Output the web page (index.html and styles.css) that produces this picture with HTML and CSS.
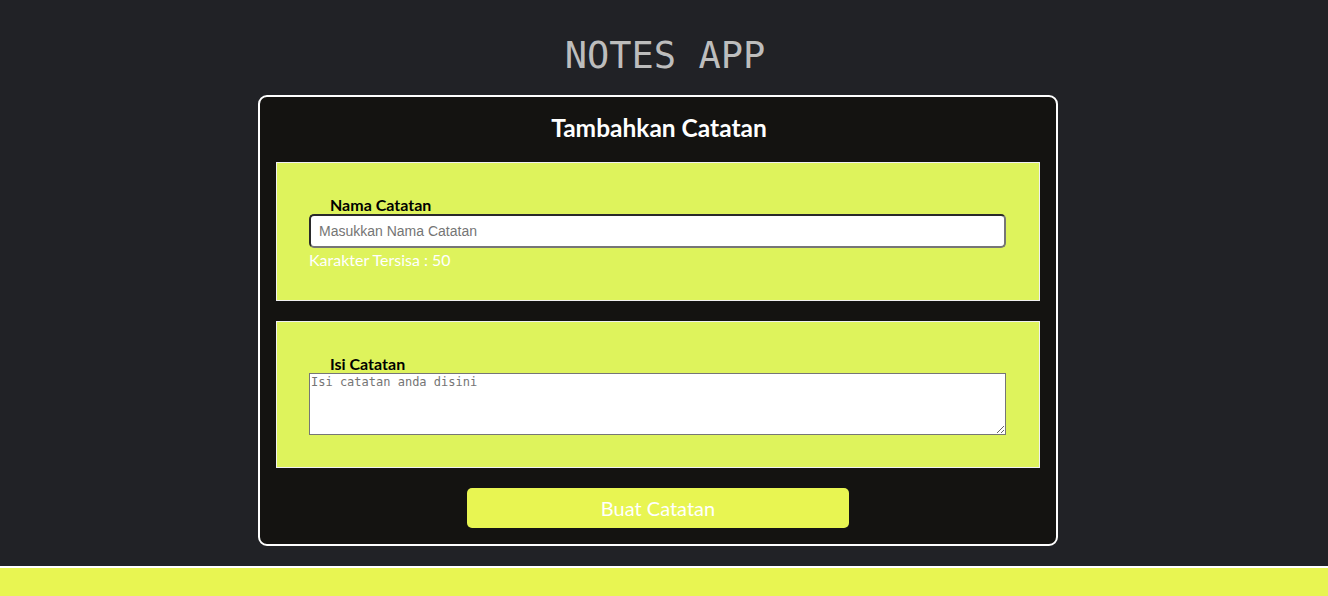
FILE: index.html
```html
<!DOCTYPE html>
<html lang="id">
<head>
<meta charset="utf-8">
<title>Notes App</title>
<link rel="stylesheet" href="styles.css">
</head>
<body>
<header class="app-header">
  <h1 class="app-title">NOTES APP</h1>
</header>
<main class="main">
  <form class="note-card">
    <h2 class="card-title">Tambahkan Catatan</h2>
    <div class="field-box">
      <label class="field-label" for="title">Nama Catatan</label>
      <input class="title-input" id="title" type="text" placeholder="Masukkan Nama Catatan">
      <p class="char-count">Karakter Tersisa : 50</p>
    </div>
    <div class="field-box field-box-body">
      <label class="field-label" for="body">Isi Catatan</label>
      <textarea class="body-input" id="body" placeholder="Isi catatan anda disini"></textarea>
    </div>
    <div class="actions">
      <button class="submit-btn" type="button">Buat Catatan</button>
    </div>
  </form>
</main>
<footer class="footer"></footer>
</body>
</html>
```
FILE: styles.css
```css
* { box-sizing: border-box; }
html, body { margin: 0; padding: 0; }
body {
  background: #212226;
  font-family: Lato, "Liberation Sans", sans-serif;
  min-height: 596px;
  display: flex;
  flex-direction: column;
}
.app-header {
  display: flex;
  justify-content: center;
  padding-top: 34px;
}
.app-title {
  margin: 0;
  font-family: "DejaVu Sans Mono", monospace;
  font-weight: 400;
  font-size: 37px;
  line-height: 44px;
  color: #bdbdbd;
  letter-spacing: 0;
  padding-left: 2px;
}
.main {
  display: flex;
  padding-top: 17px;
  padding-left: 258px;
}
.note-card {
  width: 800px;
  background: #141311;
  border: 2px solid #ffffff;
  border-radius: 9px;
  padding: 16px 16px 16px 16px;
  display: flex;
  flex-direction: column;
}
.card-title {
  margin: 0 0 19px 0;
  text-align: center;
  color: #ffffff;
  font-size: 24.5px;
  font-weight: 700;
  line-height: 30px;
  padding-left: 2px;
}
.field-box {
  background: #def35c;
  border: 1px solid #f0f0f0;
  padding: 33px 33px 30px 32px;
  display: flex;
  flex-direction: column;
}
.field-box-body {
  margin-top: 20px;
  padding-bottom: 32px;
}
.field-label {
  font-weight: 700;
  font-size: 16px;
  line-height: 18px;
  color: #000000;
  padding-left: 21px;
}
.title-input {
  height: 34px;
  width: 100%;
  border: 2px solid #2a2a2a;
  border-right-color: #767676;
  border-bottom-color: #767676;
  border-radius: 5px;
  background: #ffffff;
  padding: 0 8px;
  font-family: "Liberation Sans", Arial, sans-serif;
  font-size: 14px;
  color: #333;
  outline: none;
}
.title-input::placeholder { color: #757575; }
.char-count {
  margin: 2px 0 0 0;
  color: #ffffff;
  font-size: 16px;
  line-height: 20px;
}
.body-input {
  height: 62px;
  width: 100%;
  border: 1px solid #767676;
  background: #ffffff;
  padding: 1px 1px;
  font-family: "DejaVu Sans Mono", monospace;
  font-size: 12px;
  resize: vertical;
  display: block;
}
.body-input::placeholder { color: #757575; }
.actions {
  display: flex;
  justify-content: center;
  margin-top: 20px;
}
.submit-btn {
  width: 382px;
  height: 40px;
  background: #e8f552;
  border: none;
  border-radius: 5px;
  color: #ffffff;
  font-family: Lato, "Liberation Sans", sans-serif;
  font-size: 20px;
  cursor: pointer;
}
.footer {
  margin-top: 20px;
  height: 31px;
  background: #e8f552;
  border-top: 2px solid #ffffff;
}
```
